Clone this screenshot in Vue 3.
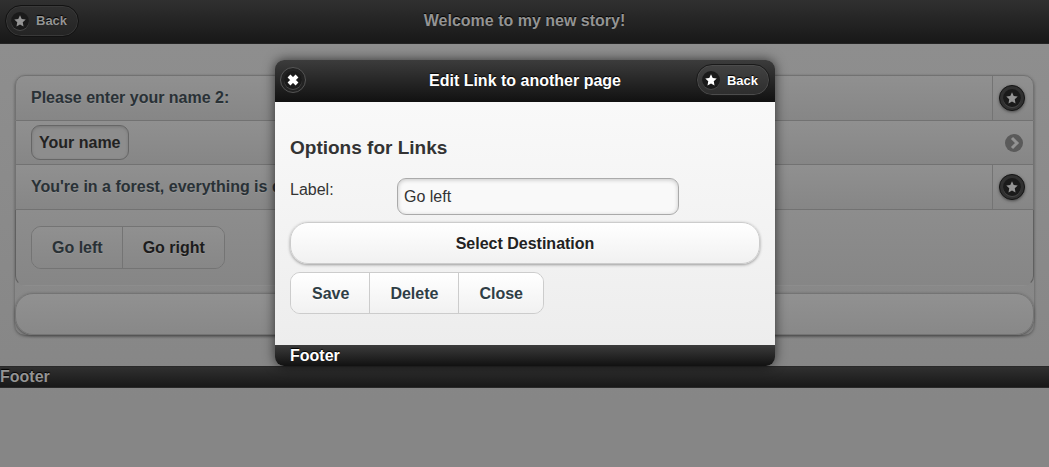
<script setup>
import { ref } from 'vue'

const star = 'M7 0.4 9 4.7 13.7 5.2 10.2 8.5 11.1 13.3 7 11 2.9 13.3 3.8 8.5 0.3 5.2 5 4.7Z'
const label = ref('Go left')
const actions = ['Save', 'Delete', 'Close']
</script>

<template>
  <div class="app">
    <div class="story">
      <header class="bar">
        <button type="button" class="back">
          <span class="disc"><svg viewBox="0 0 14 14"><path :d="star" /></svg></span>Back
        </button>
        <h1>Welcome to my new story!</h1>
      </header>

      <main class="page">
        <ul class="list">
          <li class="row first">
            <a href="#name-prompt">Please enter your name 2:</a>
            <span class="split">
              <button type="button" class="round" aria-label="Edit name prompt">
                <span class="disc"><svg viewBox="0 0 14 14"><path :d="star" /></svg></span>
              </button>
            </span>
          </li>
          <li class="row middle">
            <button type="button" class="name">Your name</button>
            <svg class="arrow" viewBox="0 0 18 18">
              <circle cx="9" cy="9" r="9" />
              <path d="M7 4 12 9 7 14" />
            </svg>
          </li>
          <li class="row">
            <a href="#forest">You're in a forest, everything is dark</a>
            <span class="split">
              <button type="button" class="round" aria-label="Edit forest text">
                <span class="disc"><svg viewBox="0 0 14 14"><path :d="star" /></svg></span>
              </button>
            </span>
          </li>
          <li class="choices">
            <div class="group dim">
              <button type="button">Go left</button>
              <button type="button" class="plain">Go right</button>
            </div>
          </li>
          <li class="add"><button type="button" class="wide dim" aria-label="Add"></button></li>
        </ul>
      </main>
      <footer class="foot">Footer</footer>
    </div>

    <div class="overlay">
      <section class="dialog" role="dialog" aria-labelledby="dialog-title">
        <header class="bar">
          <button type="button" class="round close" aria-label="Close dialog">
            <span class="disc"><svg class="cross" viewBox="0 0 14 14"><path d="M3 3 11 11M11 3 3 11" /></svg></span>
          </button>
          <h2 id="dialog-title">Edit Link to another page</h2>
          <button type="button" class="back end">
            <span class="disc"><svg viewBox="0 0 14 14"><path :d="star" /></svg></span>Back
          </button>
        </header>
        <div class="body">
          <h3>Options for Links</h3>
          <div class="field">
            <label for="link-label">Label:</label>
            <input id="link-label" v-model="label" type="text" />
          </div>
          <button type="button" class="wide">Select Destination</button>
          <div class="group">
            <button v-for="action in actions" :key="action" type="button">{{ action }}</button>
          </div>
        </div>
        <footer class="foot">Footer</footer>
      </section>
    </div>
  </div>
</template>

<style>
html {
  background: #868686;
}
</style>

<style scoped>
.app {
  position: relative;
  min-height: 100vh;
  font: 16px/21px "Liberation Sans", Arial, sans-serif;
  color: #333;
}
.app * {
  box-sizing: border-box;
}
button {
  margin: 0;
  font: inherit;
  font-weight: bold;
  cursor: pointer;
}
h1, h2, h3 {
  margin: 0;
  font-weight: bold;
}
h1, h2 {
  grid-column: 2;
  grid-row: 1;
  font-size: 16px;
}

.story {
  min-height: 100vh;
  background: linear-gradient(#8f8f8f, #868686 400px);
}
.bar {
  display: grid;
  grid-template-columns: 1fr auto 1fr;
  align-items: center;
  height: 44px;
  padding: 0 5px 2px;
  border-bottom: 1px solid #242424;
  background: linear-gradient(#303030, #181818);
  color: #949494;
  text-shadow: 0 -1px 1px #000;
}
.back {
  grid-row: 1;
  justify-self: start;
  display: flex;
  align-items: center;
  gap: 7px;
  height: 32px;
  padding: 0 11px 0 5px;
  border: 1px solid #121212;
  border-radius: 16px;
  background: linear-gradient(#303030, #242424);
  box-shadow: inset 0 0 0 1px #393939;
  color: #949494;
  font-size: 13px;
  text-shadow: 0 -1px 1px #000;
}
.end {
  grid-column: 3;
  justify-self: end;
}
.disc {
  display: flex;
  align-items: center;
  justify-content: center;
  width: 18px;
  height: 18px;
  border-radius: 50%;
  background: #1a1a1a;
  box-shadow: 0 1px 0 #474747;
}
.disc svg {
  width: 12px;
  height: 12px;
  fill: #949494;
}

.page {
  padding: 31px 15px;
}
.list {
  margin: 0;
  padding: 0;
  list-style: none;
  border-radius: 10px;
  box-shadow: 0 1px 3px #555;
}
.row {
  display: flex;
  align-items: stretch;
  height: 45px;
  border: 1px solid #727272;
  border-top: 0;
  background: linear-gradient(#909090, #868686);
}
.first {
  height: 46px;
  border-top: 1px solid #727272;
  border-radius: 10px 10px 0 0;
}
.middle {
  height: 44px;
  align-items: center;
  justify-content: space-between;
  padding: 0 10px 0 15px;
}
.row a {
  flex: 1;
  padding: 11px 15px;
  color: #293136;
  font-weight: bold;
  text-decoration: none;
  text-shadow: 0 1px 0 #969696;
}
.split {
  display: flex;
  align-items: center;
  justify-content: center;
  width: 41px;
  border-left: 1px solid #747474;
  padding-right: 2px;
}
.round {
  display: flex;
  align-items: center;
  justify-content: center;
  width: 26px;
  height: 26px;
  padding: 0;
  border: 1px solid #141414;
  border-radius: 50%;
  background: #303030;
  box-shadow: 0 1px 3px #4c4c4c;
}
.name {
  height: 35px;
  padding: 0 7px;
  border: 1px solid #666;
  border-radius: 9px;
  background: #8d8d8d;
  box-shadow: inset 0 1px 3px #777;
  color: #222;
}
.arrow {
  width: 18px;
  height: 18px;
}
.arrow circle {
  fill: #5a5a5a;
}
.arrow path {
  fill: none;
  stroke: #929292;
  stroke-width: 3;
}
.choices {
  height: 76px;
  padding: 16px 15px;
  border: 1px solid #606060;
  border-top: 0;
  border-bottom-color: transparent;
  border-radius: 0 0 10px 10px;
  background: linear-gradient(#8d8d8d, #868686);
}
.add {
  padding-top: 7px;
}

.group {
  display: inline-flex;
  height: 42px;
  vertical-align: top;
  border: 1px solid #ccc;
  border-radius: 10px;
  overflow: hidden;
}
.group button {
  padding: 0 20px;
  border: 0;
  background: linear-gradient(#fff, #f1f1f1);
  color: #2f3e46;
  text-shadow: 0 1px 0 #fff;
}
.body .group button:first-child {
  padding-left: 21px;
}
.group button + button {
  border-left: 1px solid #ccc;
}
.group.dim {
  height: 43px;
  border-color: #747474;
}
.group.dim button {
  padding: 0 19px 0 20px;
  border-color: #747474;
  background: linear-gradient(#909090, #878787);
  color: #293136;
  text-shadow: 0 1px 0 #969696;
}
.group.dim .plain {
  color: #1c1c1c;
}
.wide {
  display: block;
  width: 100%;
  height: 42px;
  border: 1px solid #ccc;
  border-radius: 18px;
  background: linear-gradient(#fff, #f1f1f1);
  box-shadow: 0 1px 3px #999;
  color: #222;
  text-shadow: 0 1px 0 #fff;
}
.wide.dim {
  border-color: #747474;
  background: linear-gradient(#919191, #888);
  box-shadow: 0 1px 3px #4c4c4c;
}
.foot {
  height: 22px;
  border-top: 1px solid #292929;
  border-bottom: 1px solid #292929;
  background: linear-gradient(#303030, #181818);
  color: #949494;
  font-weight: bold;
  line-height: 20px;
  text-shadow: 0 -1px 1px #000;
}

.overlay {
  position: absolute;
  inset: 0;
  display: flex;
  align-items: flex-start;
  justify-content: center;
  padding: 60px 0 0 1px;
}
.dialog {
  width: 500px;
  max-width: 100%;
  border-radius: 9px;
  overflow: hidden;
  box-shadow: 0 0 12px rgba(0, 0, 0, 0.65);
}
.dialog .bar {
  height: 42px;
  border-bottom: 0;
  background: linear-gradient(#3c3c3c, #111);
  color: #fff;
}
.dialog .back {
  border-color: #1a1a1a;
  background: linear-gradient(#424242, #2d2d2d);
  box-shadow: inset 0 0 0 1px #4c4c4c;
  color: #fff;
}
.dialog .disc svg {
  fill: #fff;
}
.dialog .close {
  grid-row: 1;
  border-color: #555;
  background: #222;
  box-shadow: none;
}
.dialog .disc .cross {
  width: 14px;
  height: 14px;
  fill: none;
  stroke: #fff;
  stroke-width: 4;
}
.body {
  padding: 34px 15px 31px;
  background: linear-gradient(#f9f9f9, #ededed);
}
h3 {
  font-size: 19px;
  line-height: 24px;
}
.field {
  display: grid;
  grid-template-columns: 107px 60%;
  margin: 18px 0 7px;
}
.field label {
  padding-top: 1px;
}
.field input {
  width: 100%;
  height: 37px;
  padding: 0 6px;
  border: 1px solid #aaa;
  border-radius: 9px;
  outline: 0;
  background: #f9f9f9;
  box-shadow: inset 0 1px 4px rgba(0, 0, 0, 0.2);
  color: #333;
  font: inherit;
}
.body .group {
  display: flex;
  width: fit-content;
  margin-top: 8px;
}
.dialog .foot {
  height: 21px;
  padding-left: 15px;
  border: 0;
  background: linear-gradient(#3c3c3c, #111);
  color: #fff;
  line-height: 21px;
}
</style>
